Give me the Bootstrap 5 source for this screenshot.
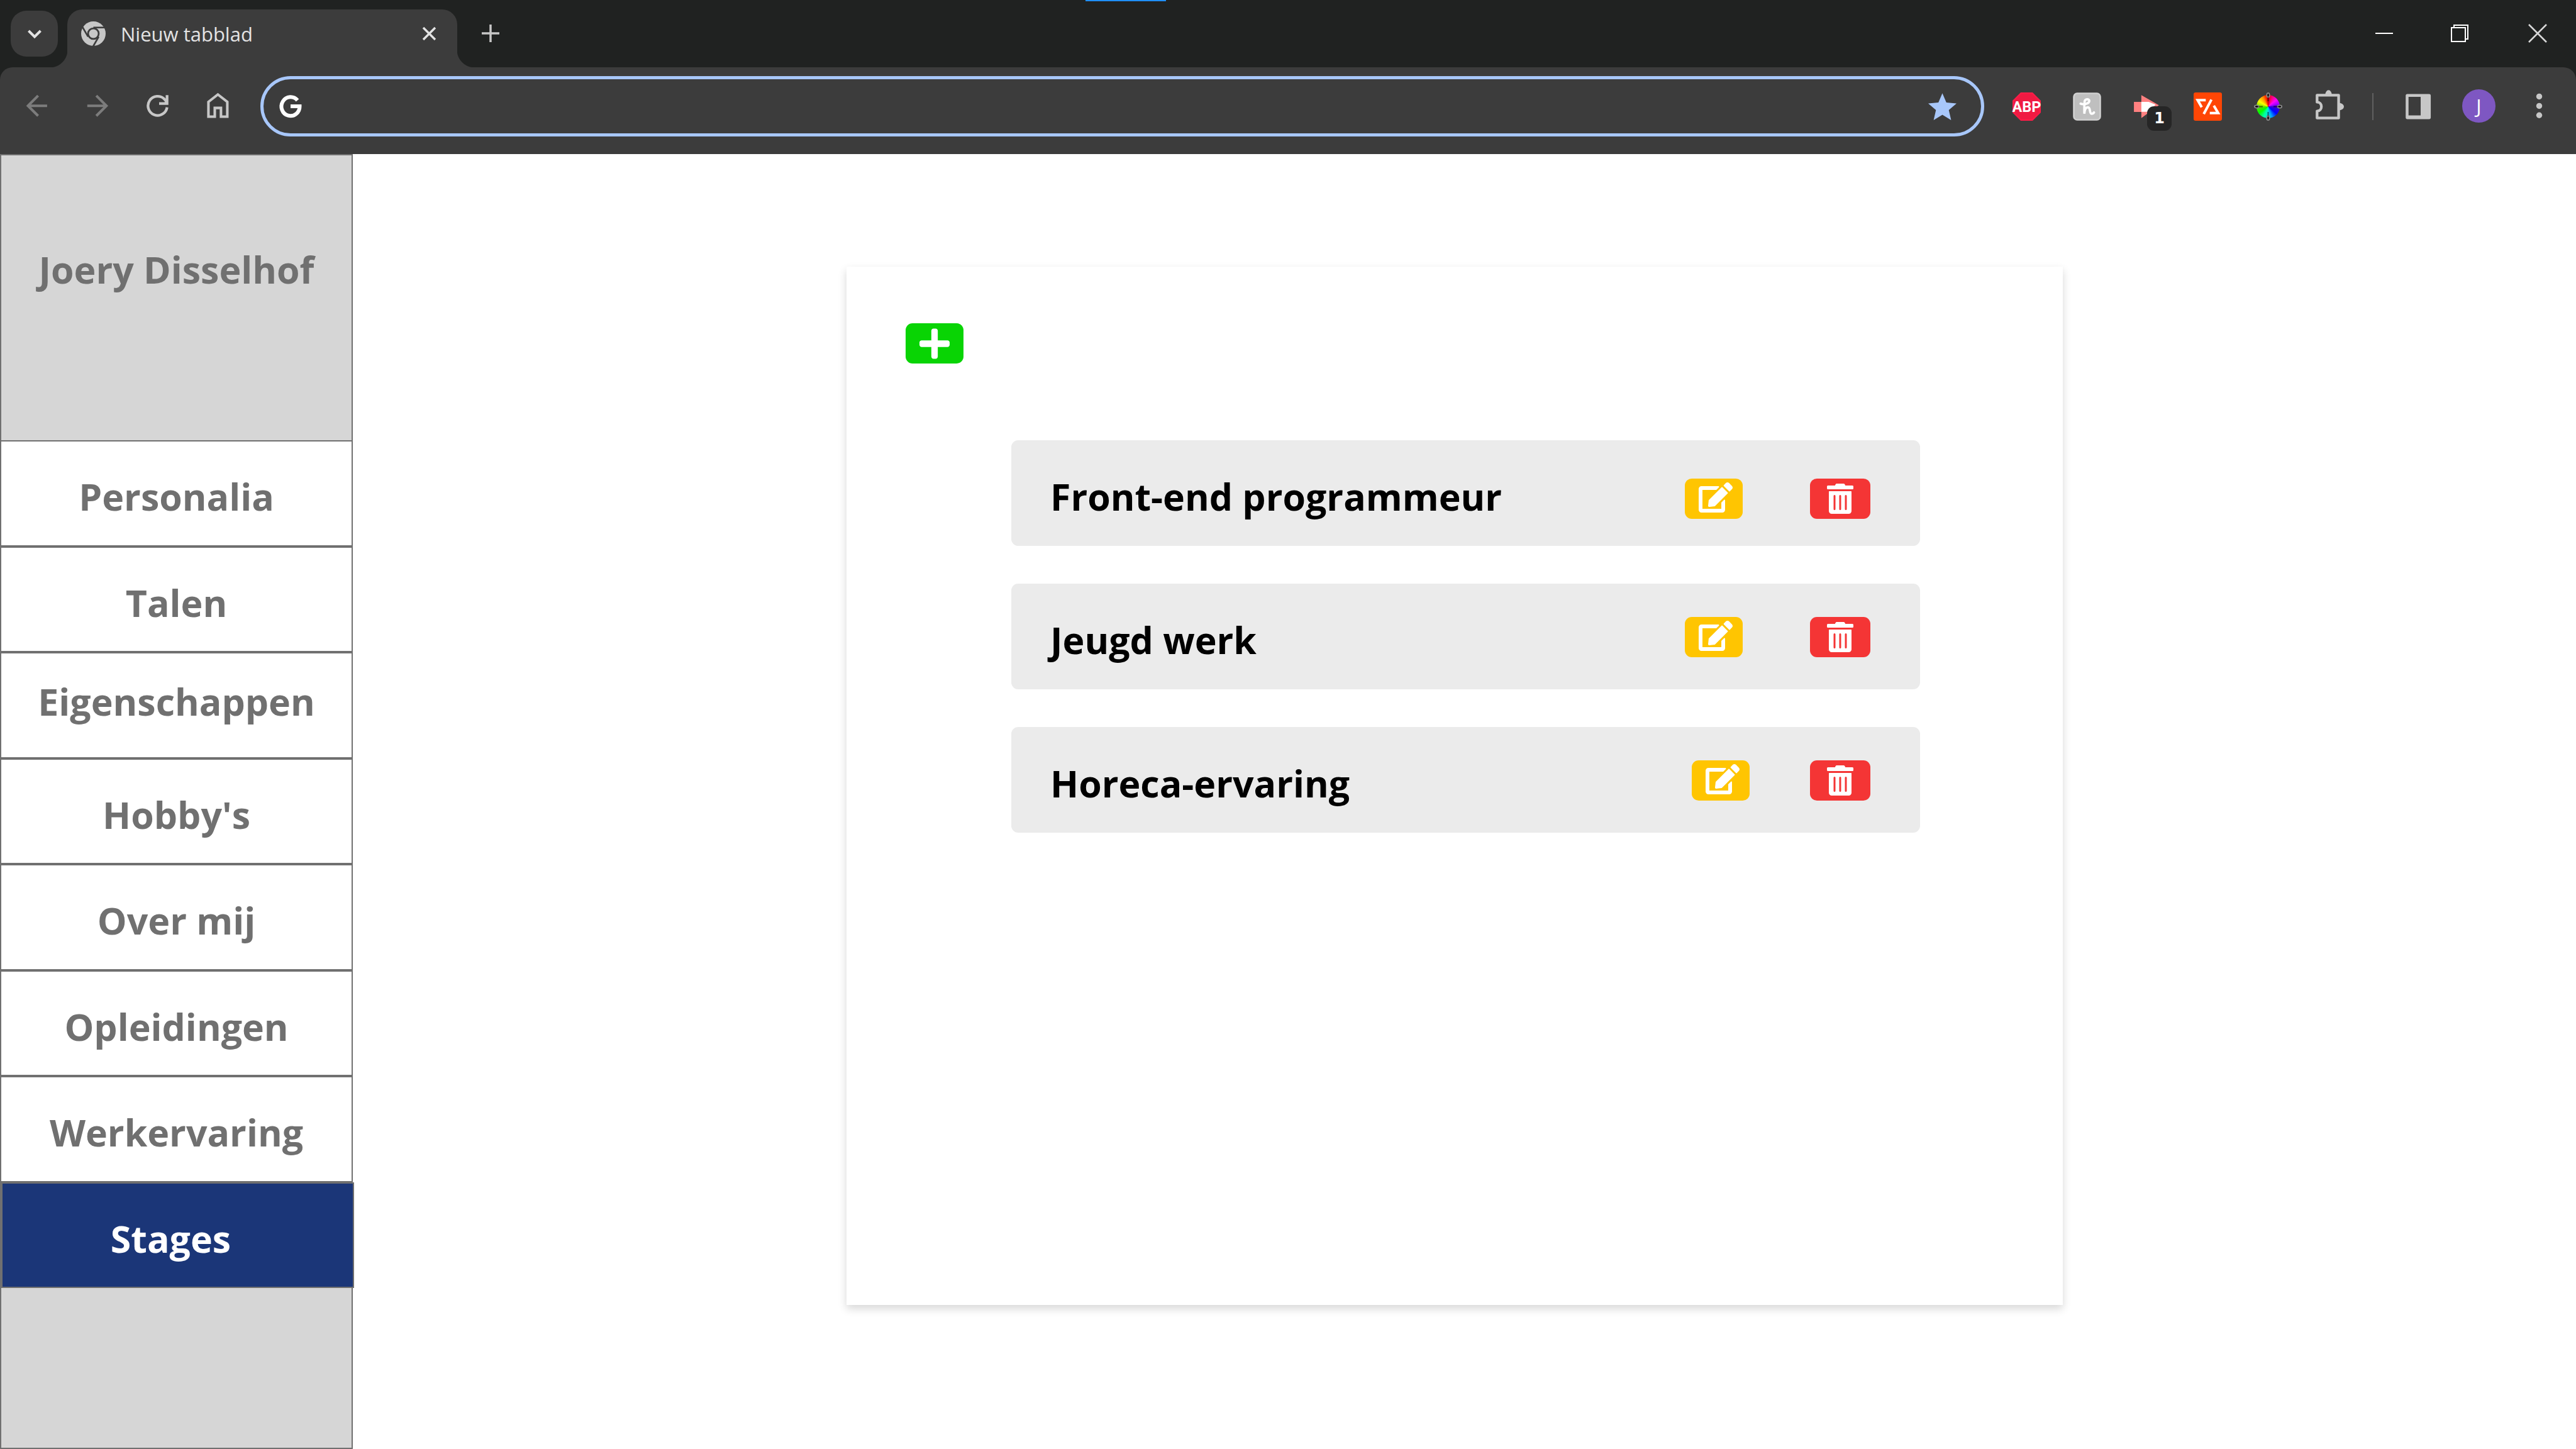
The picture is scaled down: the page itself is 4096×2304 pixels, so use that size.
<!DOCTYPE html>
<html lang="nl">
<head>
<meta charset="utf-8">
<meta name="viewport" content="width=device-width, initial-scale=1">
<title>Nieuw tabblad</title>
<link href="https://cdn.jsdelivr.net/npm/bootstrap@5.3.0/dist/css/bootstrap.min.css" rel="stylesheet">
<style>
  :root { --strip: #202221; --bar: #3c3c3c; --icon: #c7c7c7; --line: #707070; }
  body { font-family: "Open Sans", "Noto Sans", sans-serif; background: #fff; }
  svg { display: block; overflow: visible; }
  button { border: 0; padding: 0; background: transparent; color: inherit; flex: none; }

  /* browser window */
  .browser { background: var(--strip); color: var(--icon); }
  .tabstrip { height: 107px; padding: 15px 47px 0 17px; }
  .tabsearch { width: 75px; height: 73px; margin: 2px 15px 0 0; border-radius: 25px; background: var(--bar); color: #e3e3e3; display: grid; place-items: center; }
  .tabpane { width: 620px; height: 92px; padding: 0 34px 16px 22px; border-radius: 24px 24px 0 0; background: var(--bar); color: #e3e3e3; font-size: 31px; line-height: 44px; }
  .tabpane::before, .tabpane::after { content: ""; position: absolute; bottom: 0; width: 28px; height: 28px; }
  .tabpane::before { left: -28px; background: radial-gradient(circle at 0 0, transparent 28px, var(--bar) 29px); }
  .tabpane::after { right: -28px; background: radial-gradient(circle at 100% 0, transparent 28px, var(--bar) 29px); }
  .tabname { padding-top: 2px; }
  .newtab { margin: 24px 0 0 39px; }
  .wincontrols { gap: 92px; height: 76px; color: #fff; }
  .drag { left: 1726px; width: 128px; height: 2px; background: #1f8fff; }

  .toolbar { padding: 14px 36px 28px 37px; border-radius: 20px 20px 0 0; background: var(--bar); }
  .icons { gap: 51px; }
  .slot { width: 45px; height: 45px; }
  .dim { color: #7c7c7c; }
  .omnibox { height: 96px; margin: 0 45px 0 44px; padding: 0 39px 0 25px; border: 5px solid #a8c7fa; border-radius: 48px; gap: 32px; }
  .omnibox input { border: 0; outline: 0; background: transparent; color: #fff; font-size: 32px; min-width: 0; }
  .star { color: #a8c7fa; }
  .wheel::before { content: ""; position: absolute; inset: 4px; border-radius: 50%; background: conic-gradient(#d80000, #ff0080 25deg, #ff00ff 50deg, #a000ff 75deg, #4000d0 90deg, #0000ff 130deg, #00a0ff 160deg, #00e0e0 180deg, #00ffa0 205deg, #00ff00 235deg, #50e000 265deg, #a0f000 280deg, #ffff00 300deg, #ff9000 330deg, #ff3000 345deg, #d80000); }
  .count { left: 22px; top: 22px; width: 39px; height: 39px; border-radius: 11px; background: #262626; color: #fff; font: bold 24px/39px "DejaVu Sans", sans-serif; }
  .divider { width: 2px; height: 43px; margin: 0 48px 0 47px; background: #606060; }
  .avatar { width: 53px; height: 53px; margin: 0 47px 2px 48px; border-radius: 50%; background: #7e57c2; color: #fff; font-size: 31px; line-height: 51px; }

  /* page */
  .sidebar { width: 561px; background: #d6d6d6; border: 2px solid var(--line); color: var(--line); font-size: 59px; font-weight: 700; line-height: 84px; }
  .owner { height: 453px; padding-top: 139px; font-size: inherit; font-weight: inherit; line-height: inherit; margin: 0; }
  .menu { height: 1348px; margin: 0 -2px; }
  .menu a { flex: 1 1 0; display: flex; align-items: center; justify-content: center; padding: 12px 0 2px; background: #fff; border: 2px solid var(--line); color: inherit; text-decoration: none; }
  .menu a.raised { padding: 1px 0 13px; }
  .menu a.current { margin: 0 -2px 0 2px; padding-right: 22px; background: #1b3678; color: #fff; }

  .stage { padding: 179px 816px 229px 785px; }
  .panel { padding: 90px 227px 0 94px; background: #fff; box-shadow: 0 6px 13px rgba(0, 0, 0, .16); }
  .tool { width: 92px; height: 64px; border-radius: 11px; color: #fff; display: grid; place-items: center; }
  .add { background: #09d404; }
  .edit { background: #ffc501; padding: 0 0 4px 6px; }
  .remove { width: 96px; background: #f43535; }
  .jobs { margin: 122px 0 0 168px; padding: 0; gap: 60px; list-style: none; }
  .job { height: 168px; padding: 0 79px 0 62px; border-radius: 11px; background: #ebebeb; color: #000; }
  .job h2 { margin: 0; padding-top: 10px; font-size: 59px; font-weight: 700; line-height: 84px; }
  .actions { gap: 107px; padding-top: 2px; }
  .actions.low { padding-top: 18px; }
  .actions.tight { gap: 96px; }
</style>
<script src="https://cdn.jsdelivr.net/npm/bootstrap@5.3.0/dist/js/bootstrap.bundle.min.js"></script>
</head>
<body class="d-flex flex-column min-vh-100">

<svg class="d-none" aria-hidden="true">
  <symbol id="pen" viewBox="0 0 576 512"><path fill="currentColor" d="M402.6 83.2l90.2 90.2c3.8 3.8 3.8 10 0 13.8L274.4 405.6l-92.8 10.3c-12.4 1.4-22.9-9.1-21.5-21.5l10.3-92.8L388.8 83.2c3.8-3.8 10-3.8 13.8 0zm162-22.9l-48.8-48.8c-15.2-15.2-39.9-15.2-55.2 0l-35.4 35.4c-3.8 3.8-3.8 10 0 13.8l90.2 90.2c3.8 3.8 10 3.8 13.8 0l35.4-35.4c15.2-15.3 15.2-40 0-55.2zM384 346.2V448H64V128h229.8c3.2 0 6.2-1.3 8.5-3.5l40-40c7.6-7.6 2.2-20.5-8.5-20.5H48C21.5 64 0 85.5 0 112v352c0 26.5 21.5 48 48 48h352c26.5 0 48-21.5 48-48V306.2c0-10.7-12.9-16-20.5-8.5l-40 40c-2.2 2.3-3.5 5.3-3.5 8.5z"/></symbol>
  <symbol id="bin" viewBox="0 0 448 512"><path fill="currentColor" d="M32 464a48 48 0 0 0 48 48h288a48 48 0 0 0 48-48V136a8 8 0 0 0-8-8H40a8 8 0 0 0-8 8zm272-256a16 16 0 0 1 32 0v224a16 16 0 0 1-32 0zm-96 0a16 16 0 0 1 32 0v224a16 16 0 0 1-32 0zm-96 0a16 16 0 0 1 32 0v224a16 16 0 0 1-32 0zM432 32H312l-9.4-18.7A24 24 0 0 0 281.1 0H166.8a23.72 23.72 0 0 0-21.4 13.3L136 32H16A16 16 0 0 0 0 48v32a16 16 0 0 0 16 16h416a16 16 0 0 0 16-16V48a16 16 0 0 0-16-16z"/></symbol>
</svg>

<header class="browser position-relative">
  <div class="drag position-absolute top-0"></div>
  <div class="tabstrip d-flex align-items-start">
    <button class="tabsearch" aria-label="Tabbladen zoeken"><svg width="22" height="14" viewBox="0 0 22 14" fill="none" stroke="currentColor" stroke-width="4"><path d="M1.5 2l9.5 9.5L20.5 2"/></svg></button>
    <div class="tabpane position-relative d-flex align-items-center">
      <svg width="39" height="39" viewBox="0 0 18 18"><circle cx="9" cy="9" r="9" fill="#c7c7c7"/><g stroke="#3c3c3c" stroke-width="1.2"><path d="M9 4.5h9"/><path d="M9 4.5h9" transform="rotate(120 9 9)"/><path d="M9 4.5h9" transform="rotate(240 9 9)"/></g><circle cx="9" cy="9" r="3.9" fill="#c7c7c7" stroke="#3c3c3c" stroke-width="1.3"/></svg>
      <span class="tabname ms-4 flex-grow-1">Nieuw tabblad</span>
      <button aria-label="Sluiten"><svg width="21" height="21" viewBox="0 0 21 21" stroke="currentColor" stroke-width="3.5"><path d="M1 1l19 19M20 1L1 20"/></svg></button>
    </div>
    <button class="newtab" aria-label="Nieuw tabblad openen"><svg width="28" height="28" viewBox="0 0 28 28" stroke="currentColor" stroke-width="3.5"><path d="M0 14h28M14 0v28"/></svg></button>
    <div class="wincontrols d-flex align-items-center ms-auto">
      <button aria-label="Minimaliseren"><svg width="28" height="28" viewBox="0 0 28 28"><path fill="currentColor" d="M0 13h28v2H0z"/></svg></button>
      <button aria-label="Herstellen"><svg width="28" height="28" viewBox="0 0 28 28" fill="none" stroke="currentColor" stroke-width="2"><path d="M1 5h22v22H1zM5 5V1h22v22h-4"/></svg></button>
      <button class="ms-1" aria-label="Venster sluiten"><svg width="28" height="28" viewBox="0 0 28 28" stroke="#d8d8d8" stroke-width="2.5"><path d="M0 0l28 28M28 0L0 28"/></svg></button>
    </div>
  </div>

  <div class="toolbar d-flex align-items-center">
    <div class="icons d-flex">
      <button class="slot dim" aria-label="Vorige"><svg class="slot" viewBox="0 0 21 21" fill="none" stroke="currentColor" stroke-width="1.9"><path d="M17.7 9.9H3.8M11 2.4L3.5 9.9l7.5 7.5"/></svg></button>
      <button class="slot dim" aria-label="Volgende"><svg class="slot" viewBox="0 0 21 21" fill="none" stroke="currentColor" stroke-width="1.9"><path d="M2.7 9.9h13.9M9.4 2.4l7.5 7.5-7.5 7.5"/></svg></button>
      <button class="slot" aria-label="Vernieuwen"><svg class="slot" viewBox="0 0 21 21" fill="none" stroke="currentColor" stroke-width="2"><path d="M17.1 11A7.1 7.1 0 1 1 15.2 5L17 7"/><path d="M17.1 2v6.2H11.2"/><path fill="currentColor" stroke="none" d="M14 8.5l3.5-3.5v3.5z"/></svg></button>
      <button class="slot" aria-label="Startpagina"><svg class="slot" viewBox="0 0 21 21" fill="none" stroke="currentColor" stroke-width="1.9"><path d="M3 7l7-5.500L17 7v11h-4.700v-6.500H7.700V18H3z"/></svg></button>
    </div>
    <form class="omnibox d-flex align-items-center flex-grow-1" onsubmit="return false">
      <svg width="36" height="36" viewBox="0 0 36 36" fill="none" stroke="#fff" stroke-width="6"><path d="M29 8.5A14.5 15 0 1 0 32.5 18H18"/></svg>
      <input class="flex-grow-1" type="text" aria-label="Adresbalk">
      <button class="star" type="button" aria-label="Bladwijzer"><svg width="45" height="43" viewBox="2 2 20 19"><path fill="currentColor" d="M12 17.27L18.18 21l-1.64-7.03L22 9.24l-7.19-.61L12 2 9.19 8.63 2 9.24l5.46 4.73L5.82 21z"/></svg></button>
    </form>
    <div class="icons d-flex">
      <button class="slot" aria-label="Adblock Plus"><svg class="slot" viewBox="0 0 21 21"><path fill="#f01a42" stroke="#ff1c48" d="M6.3.5h8.4l5.8 5.8v8.4l-5.8 5.8H6.3L.5 14.7V6.3z"/><text x="10.5" y="14.6" text-anchor="middle" font-family="Roboto, sans-serif" font-weight="700" font-size="11" fill="#fff">ABP</text></svg></button>
      <button class="slot" aria-label="Honey"><svg class="slot" viewBox="0 0 21 21" fill="none"><rect x=".7" y=".7" width="19.6" height="19.6" rx="2.5" fill="#bfbfbf" stroke="#d0d0d0" stroke-width="1.2"/><path stroke="#fff" stroke-width="1.7" stroke-linecap="round" d="M5.7 8.300c2 .9 6.300.3 6.500-2 .1-1.600-3.200-1.800-3.500.5-.3 3-.2 6-.2 9 .2-3 1.200-4.800 2.600-4.800 2.400 0 .8 4.800 2.800 4.800.9 0 1.500-.5 1.800-1"/></svg></button>
      <button class="slot position-relative" aria-label="Downloads, 1"><svg class="slot" viewBox="0 0 21 21"><path fill="#ff8080" d="M.5 7H6V2l13 7.500L6 19v-4.500H.5z"/><path fill="#fff" d="M6 7h5.500l5 2L12 14.300H6z"/></svg><span class="count position-absolute">1</span></button>
      <button class="slot" aria-label="Code"><svg class="slot" viewBox="0 0 21 21" fill="none"><rect width="21" height="21" rx="1.5" fill="#ff4605"/><path stroke="#fff" stroke-width="1.9" d="M9 5.700H3l3 5.300M13.200 5.300L7.500 16M15 9.800l3.200 5.500H12"/></svg></button>
      <button class="slot wheel position-relative" aria-label="Kleurkiezer"><svg class="slot position-relative" viewBox="0 0 21 21"><g fill="#000" stroke="#888" stroke-width=".9"><ellipse cx="10.5" cy="2" rx="1" ry="1.6"/><ellipse cx="10.5" cy="19" rx="1" ry="1.6"/><ellipse cx="2" cy="10.5" rx="1.6" ry="1"/><ellipse cx="19" cy="10.5" rx="1.6" ry="1"/></g><path stroke="#000" stroke-opacity=".5" d="M10.5 3.500v3M10.500 14.500v3M3.500 10.500h3M14.500 10.500h3"/></svg></button>
      <button class="slot" aria-label="Extensies"><svg class="slot" viewBox="0 0 21 21" fill="none" stroke="currentColor" stroke-width="2" stroke-linejoin="round"><path d="M2 2h16v17H2v-5.200c2 0 3.200-1.500 3.200-3.300S4 7.200 2 7.200z"/><path fill="currentColor" stroke="none" d="M8 2a2.500 3.700 0 0 1 5 0zM18 7.700a3.800 2.700 0 0 1 0 5.600z"/></svg></button>
    </div>
    <div class="divider"></div>
    <button class="slot" aria-label="Zijvenster"><svg class="slot" viewBox="0 0 21 21"><path fill="currentColor" fill-rule="evenodd" d="M2.7 1.200h16.200a1.200 1.200 0 0 1 1.200 1.200v16.200a1.200 1.200 0 0 1-1.200 1.200H2.700a1.200 1.200 0 0 1-1.200-1.200V2.400a1.200 1.200 0 0 1 1.200-1.200zm.9 2.100v13.700h9V3.300z"/></svg></button>
    <button class="avatar" aria-label="Profiel">J</button>
    <button class="slot" aria-label="Menu"><svg class="slot" viewBox="0 0 21 21" fill="currentColor"><circle cx="10.5" cy="3" r="2.2"/><circle cx="10.5" cy="10" r="2.2"/><circle cx="10.5" cy="16.9" r="2.2"/></svg></button>
  </div>
</header>

<div class="d-flex flex-grow-1">
  <aside class="sidebar flex-shrink-0 text-center">
    <h1 class="owner">Joery Disselhof</h1>
    <nav class="menu d-flex flex-column">
      <a href="#personalia">Personalia</a>
      <a href="#talen">Talen</a>
      <a class="raised" href="#eigenschappen">Eigenschappen</a>
      <a href="#hobbys">Hobby's</a>
      <a href="#overmij">Over mij</a>
      <a href="#opleidingen">Opleidingen</a>
      <a href="#werkervaring">Werkervaring</a>
      <a class="current" href="#stages" aria-current="page">Stages</a>
    </nav>
  </aside>

  <main class="stage d-flex flex-grow-1">
    <section class="panel flex-grow-1">
      <button class="tool add" aria-label="Toevoegen"><svg width="48" height="55" viewBox="0 0 448 512"><path fill="currentColor" d="M416 208H272V64c0-17.67-14.33-32-32-32h-32c-17.67 0-32 14.33-32 32v144H32c-17.67 0-32 14.33-32 32v32c0 17.67 14.33 32 32 32h144v144c0 17.67 14.33 32 32 32h32c17.67 0 32-14.33 32-32V304h144c17.67 0 32-14.33 32-32v-32c0-17.67-14.33-32-32-32z"/></svg></button>
      <ul class="jobs d-flex flex-column">
        <li class="job d-flex align-items-center justify-content-between">
          <h2>Front-end programmeur</h2>
          <div class="actions low d-flex">
            <button class="tool edit" aria-label="Bewerken"><svg width="54" height="48"><use href="#pen"/></svg></button>
            <button class="tool remove" aria-label="Verwijderen"><svg width="42" height="48"><use href="#bin"/></svg></button>
          </div>
        </li>
        <li class="job d-flex align-items-center justify-content-between">
          <h2>Jeugd werk</h2>
          <div class="actions d-flex">
            <button class="tool edit" aria-label="Bewerken"><svg width="54" height="48"><use href="#pen"/></svg></button>
            <button class="tool remove" aria-label="Verwijderen"><svg width="42" height="48"><use href="#bin"/></svg></button>
          </div>
        </li>
        <li class="job d-flex align-items-center justify-content-between">
          <h2>Horeca-ervaring</h2>
          <div class="actions tight d-flex">
            <button class="tool edit" aria-label="Bewerken"><svg width="54" height="48"><use href="#pen"/></svg></button>
            <button class="tool remove" aria-label="Verwijderen"><svg width="42" height="48"><use href="#bin"/></svg></button>
          </div>
        </li>
      </ul>
    </section>
  </main>
</div>
</body>
</html>
